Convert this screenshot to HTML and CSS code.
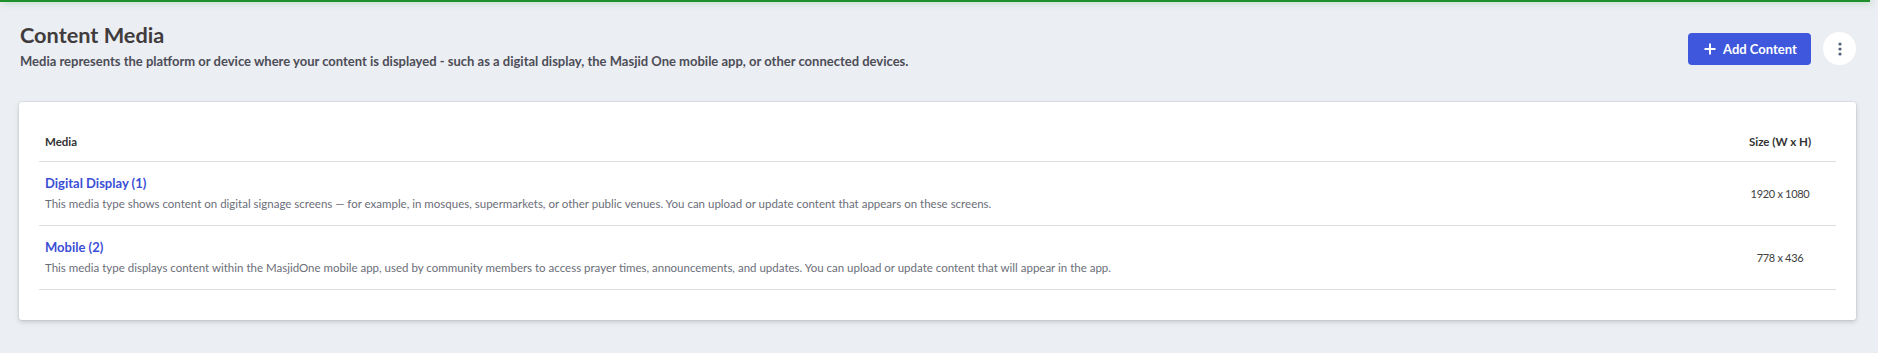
FILE: index.html
```html
<!DOCTYPE html>
<html lang="en">
<head>
<meta charset="utf-8">
<title>Content Media</title>
<link rel="stylesheet" href="styles.css">
</head>
<body>
<div class="progress"><div class="progress-bar"></div></div>
<main class="page">
  <header class="page-header">
    <div class="titles">
      <h1 class="title">Content Media</h1>
      <p class="subtitle">Media represents the platform or device where your content is displayed - such as a digital display, the Masjid One mobile app, or other connected devices.</p>
    </div>
    <div class="actions">
      <button class="btn-primary" type="button">
        <svg class="plus" width="12" height="12" viewBox="0 0 12 12"><path d="M6 0.5v11M0.5 6h11" stroke="#fff" stroke-width="2" fill="none"/></svg>
        <span>Add Content</span>
      </button>
      <button class="btn-kebab" type="button" aria-label="More">
        <svg width="4" height="14" viewBox="0 0 4 14"><circle cx="2" cy="2" r="1.6" fill="#51607d"/><circle cx="2" cy="7" r="1.6" fill="#51607d"/><circle cx="2" cy="12" r="1.6" fill="#51607d"/></svg>
      </button>
    </div>
  </header>

  <section class="card">
    <table class="media-table">
      <thead>
        <tr>
          <th class="col-media">Media</th>
          <th class="col-size">Size (W x H)</th>
        </tr>
      </thead>
      <tbody>
        <tr>
          <td class="col-media">
            <a class="media-name" href="#">Digital Display (1)</a>
            <div class="media-desc">This media type shows content on digital signage screens — for example, in mosques, supermarkets, or other public venues. You can upload or update content that appears on these screens.</div>
          </td>
          <td class="col-size">1920 x 1080</td>
        </tr>
        <tr>
          <td class="col-media">
            <a class="media-name" href="#">Mobile (2)</a>
            <div class="media-desc">This media type displays content within the MasjidOne mobile app, used by community members to access prayer times, announcements, and updates. You can upload or update content that will appear in the app.</div>
          </td>
          <td class="col-size">778 x 436</td>
        </tr>
      </tbody>
    </table>
  </section>
</main>
</body>
</html>
```

FILE: styles.css
```css
* { box-sizing: border-box; }

html, body {
  margin: 0;
  padding: 0;
  background: #ebeef3;
  font-family: Lato, "Open Sans", "Liberation Sans", sans-serif;
  color: #404040;
}

.progress {
  height: 2px;
  background: transparent;
}

.progress-bar {
  height: 2px;
  width: calc(100% - 8px);
  background: #1f8f2b;
  box-shadow: 2px 0 6px rgba(31, 143, 43, 0.5);
}

.page {
  padding: 20px 22px 30px 19px;
}

.page-header {
  display: flex;
  justify-content: space-between;
  align-items: flex-start;
  margin-bottom: 31px;
}

.titles {
  padding-left: 1px;
}

.title {
  margin: 0;
  font-size: 21.7px;
  line-height: 27px;
  font-weight: 700;
  color: #403b3c;
}

.subtitle {
  margin: 2px 0 0;
  font-size: 13px;
  line-height: 20px;
  font-weight: 700;
  color: #4d4d57;
}

.actions {
  display: flex;
  align-items: center;
  gap: 12px;
  margin-top: 10px;
}

.btn-primary {
  display: flex;
  align-items: center;
  gap: 7px;
  height: 32px;
  width: 123px;
  padding: 0 0 0 16px;
  border: none;
  border-radius: 4px;
  background: #3e57dc;
  color: #fff;
  font-family: inherit;
  font-size: 13px;
  font-weight: 700;
}

.btn-kebab {
  display: flex;
  align-items: center;
  justify-content: center;
  width: 33px;
  height: 33px;
  padding: 0;
  border: none;
  border-radius: 50%;
  background: #fff;
}

.card {
  background: #fff;
  border-radius: 3px;
  padding: 20px 20px 30px;
  box-shadow: 0 0 0 1px rgba(0, 0, 0, 0.04), 0 2px 5px rgba(0, 0, 0, 0.16);
}

.media-table {
  width: 100%;
  border-collapse: collapse;
}

.media-table th {
  padding: 10px 6px;
  font-size: 11.5px;
  line-height: 19px;
  font-weight: 700;
  color: #333;
  text-align: left;
  border-bottom: 1px solid #dcdcdc;
}

.media-table td {
  padding: 11px 6px 12px;
  border-bottom: 1px solid #dcdcdc;
  vertical-align: middle;
}

.media-table .col-size {
  width: 112px;
  text-align: center;
}

td.col-size {
  font-size: 11px;
  letter-spacing: -0.3px;
  color: #404040;
}

.media-name {
  display: block;
  font-size: 13px;
  line-height: 20px;
  font-weight: 700;
  color: #3b4fd6;
  text-decoration: none;
}

.media-desc {
  margin-top: 2px;
  font-size: 11.5px;
  line-height: 18px;
  color: #6b6e78;
}
```
